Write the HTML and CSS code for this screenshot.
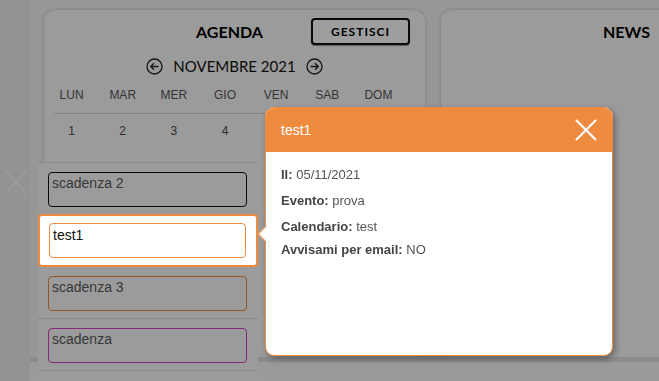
FILE: index.html
```html
<!DOCTYPE html>
<html lang="it">
<head>
  <meta charset="UTF-8" />
  <meta name="viewport" content="width=device-width, initial-scale=1.0"/>
  <title>Agenda</title>
  <link rel="stylesheet" href="styles.css">
</head>
<body>

<div class="page">
  <aside class="sidebar">
    <svg class="side-close" width="24" height="25" viewBox="0 0 24 25">
      <path d="M1 1 L23 24 M23 1 L1 24" stroke="#fff" stroke-width="1.2" fill="none"/>
    </svg>
  </aside>

  <main class="main">
    <div class="cards">
      <section class="card">
        <div class="card-head">
          <span></span>
          <h2>AGENDA</h2>
          <button class="btn-gestisci">GESTISCI</button>
        </div>

        <div class="month-nav">
          <svg width="17" height="17" viewBox="0 0 17 17">
            <circle cx="8.5" cy="8.5" r="7.5" stroke="#222" stroke-width="1.3" fill="none"/>
            <path d="M12.5 8.5 H4.8 M8 5.2 L4.7 8.5 L8 11.8" stroke="#222" stroke-width="1.3" fill="none"/>
          </svg>
          <span class="month-label">NOVEMBRE 2021</span>
          <svg width="17" height="17" viewBox="0 0 17 17">
            <circle cx="8.5" cy="8.5" r="7.5" stroke="#222" stroke-width="1.3" fill="none"/>
            <path d="M4.5 8.5 H12.2 M9 5.2 L12.3 8.5 L9 11.8" stroke="#222" stroke-width="1.3" fill="none"/>
          </svg>
        </div>

        <div class="cal-grid cal-days">
          <span>LUN</span><span>MAR</span><span>MER</span><span>GIO</span><span>VEN</span><span>SAB</span><span>DOM</span>
        </div>
        <div class="cal-line"></div>
        <div class="cal-grid cal-nums">
          <span>1</span><span>2</span><span>3</span><span>4</span><span>5</span><span>6</span><span>7</span>
        </div>
      </section>

      <section class="card">
        <div class="card-head">
          <span></span>
          <h2>NEWS</h2>
          <span></span>
        </div>
      </section>
    </div>

    <div class="footer"><div class="footer-line"></div></div>
  </main>
</div>

<!-- scadenze del giorno -->
<div class="event-list">
  <div class="event-row">
    <div class="event-box box-nero">scadenza 2</div>
  </div>
  <div class="event-row active">
    <div class="event-box box-arancio">test1</div>
  </div>
  <div class="event-row">
    <div class="event-box box-marrone">scadenza 3</div>
  </div>
  <div class="event-row">
    <div class="event-box box-viola">scadenza</div>
  </div>
</div>

<div class="overlay"></div>

<div class="popup">
  <div class="popup-head">
    <span class="popup-title">test1</span>
    <svg width="22" height="22" viewBox="0 0 22 22">
      <path d="M1 1 L21 21 M21 1 L1 21" stroke="#fff" stroke-width="2.2" fill="none"/>
    </svg>
  </div>
  <div class="popup-body">
    <p><b>Il:</b> 05/11/2021</p>
    <p><b>Evento:</b> prova</p>
    <p class="tight"><b>Calendario:</b> test</p>
    <p><b>Avvisami per email:</b> NO</p>
  </div>
</div>

</body>
</html>
```

FILE: styles.css
```css
body {
  margin: 0;
  height: 381px;
  overflow: hidden;
  font-family: "Liberation Sans", Arial, sans-serif;
  background: #f4f4f4;
}
.page {
  display: flex;
  height: 381px;
}
.sidebar {
  width: 30px;
  flex: none;
  background: #eeeeee;
  padding: 170px 0 0 4px;
  box-sizing: border-box;
}
.main {
  flex: 1;
  overflow: hidden;
  display: flex;
  flex-direction: column;
}
.cards {
  display: flex;
  gap: 16px;
  padding: 10px 0 0 14px;
  height: 357px;
  box-sizing: border-box;
}
.card {
  width: 381px;
  flex: none;
  background: #fbfbfb;
  border-radius: 12px;
  box-shadow: 0 0 4px rgba(0, 0, 0, 0.18);
}
.card-head {
  display: grid;
  grid-template-columns: 1fr auto 1fr;
  align-items: center;
  height: 27px;
  padding: 8px 20px 0 10px;
}
.card-head h2 {
  margin: 0;
  font-family: Lato, sans-serif;
  font-size: 16px;
  font-weight: bold;
  color: #000;
}
.btn-gestisci {
  justify-self: end;
  width: 99px;
  height: 27px;
  margin-right: -5px;
  background: #fff;
  border: 2px solid #111;
  border-radius: 4px;
  box-shadow: 0 1px 1px rgba(0, 0, 0, 0.4);
  font-family: Lato, sans-serif;
  font-weight: bold;
  font-size: 12px;
  letter-spacing: 1px;
  color: #000;
  padding: 0;
}
.month-nav {
  display: flex;
  justify-content: center;
  align-items: center;
  gap: 10px;
  height: 20px;
  margin-top: 11px;
}
.month-label {
  font-family: Lato, sans-serif;
  font-size: 15px;
  color: #111;
}
.cal-grid {
  display: grid;
  grid-template-columns: repeat(7, 1fr);
  width: 358px;
  margin-left: 2px;
  text-align: center;
  font-size: 12px;
  color: #555;
}
.cal-days {
  height: 20px;
  line-height: 20px;
  margin-top: 9px;
}
.cal-line {
  height: 1px;
  background: #d8d8d8;
  margin: 8px 5px 0 10px;
}
.cal-nums {
  line-height: 18px;
  padding-top: 8px;
  color: #4a4a4a;
}
.footer {
  height: 24px;
  box-sizing: border-box;
  border-top: 5px solid #e2e2e2;
  background: #f8f8f8;
}
.footer-line {
  height: 14px;
  border-bottom: 1px solid #fff;
}

.event-list {
  position: absolute;
  left: 38px;
  top: 162px;
  width: 220px;
  bottom: 0;
  background: #fbfbfb;
  border-top: 1px solid #dedede;
}
.event-row {
  height: 52px;
  box-sizing: border-box;
  padding: 9px 11px 0 10px;
  border-bottom: 1px solid #dedede;
}
.event-row.active {
  position: relative;
  z-index: 20;
  height: 53px;
  margin-top: -1px;
  background: #fff;
  border: 2px solid #ef8b3f;
  border-radius: 4px;
  padding: 7px 10px 0 9px;
}
.event-box {
  height: 35px;
  box-sizing: border-box;
  border: 1px solid #111;
  border-radius: 4px;
  padding: 2px 3px 0;
  font-size: 14px;
  color: #5a5a5a;
}
.box-arancio {
  border-color: #ef8b3f;
  color: #111;
  padding-top: 3px;
}
.box-marrone {
  border-color: #f08c42;
}
.box-viola {
  border-color: #d83ec8;
}

.overlay {
  position: fixed;
  inset: 0;
  z-index: 10;
  background: rgba(0, 0, 0, 0.38);
}

.popup {
  position: absolute;
  z-index: 30;
  left: 265px;
  top: 107px;
  width: 348px;
  height: 249px;
  box-sizing: border-box;
  background: #fff;
  border: 1px solid #ef8b3f;
  border-radius: 9px;
  box-shadow: 2px 3px 6px rgba(0, 0, 0, 0.35);
}
.popup::before {
  content: "";
  position: absolute;
  left: -6px;
  top: 120px;
  width: 11px;
  height: 11px;
  background: #fff;
  border-left: 1px solid #ef8b3f;
  border-bottom: 1px solid #ef8b3f;
  transform: rotate(45deg);
}
.popup-head {
  display: flex;
  justify-content: space-between;
  align-items: center;
  height: 44px;
  padding: 0 15px 0 15px;
  background: #ef8b3f;
  border-radius: 8px 8px 0 0;
}
.popup-title {
  color: #fff;
  font-size: 14px;
}
.popup-body {
  padding: 15px 15px;
  font-size: 13px;
  color: #555;
}
.popup-body p {
  margin: 0 0 10px;
  line-height: 16px;
}
.popup-body b {
  color: #444;
}
.popup-body .tight {
  margin-bottom: 7px;
}
```
